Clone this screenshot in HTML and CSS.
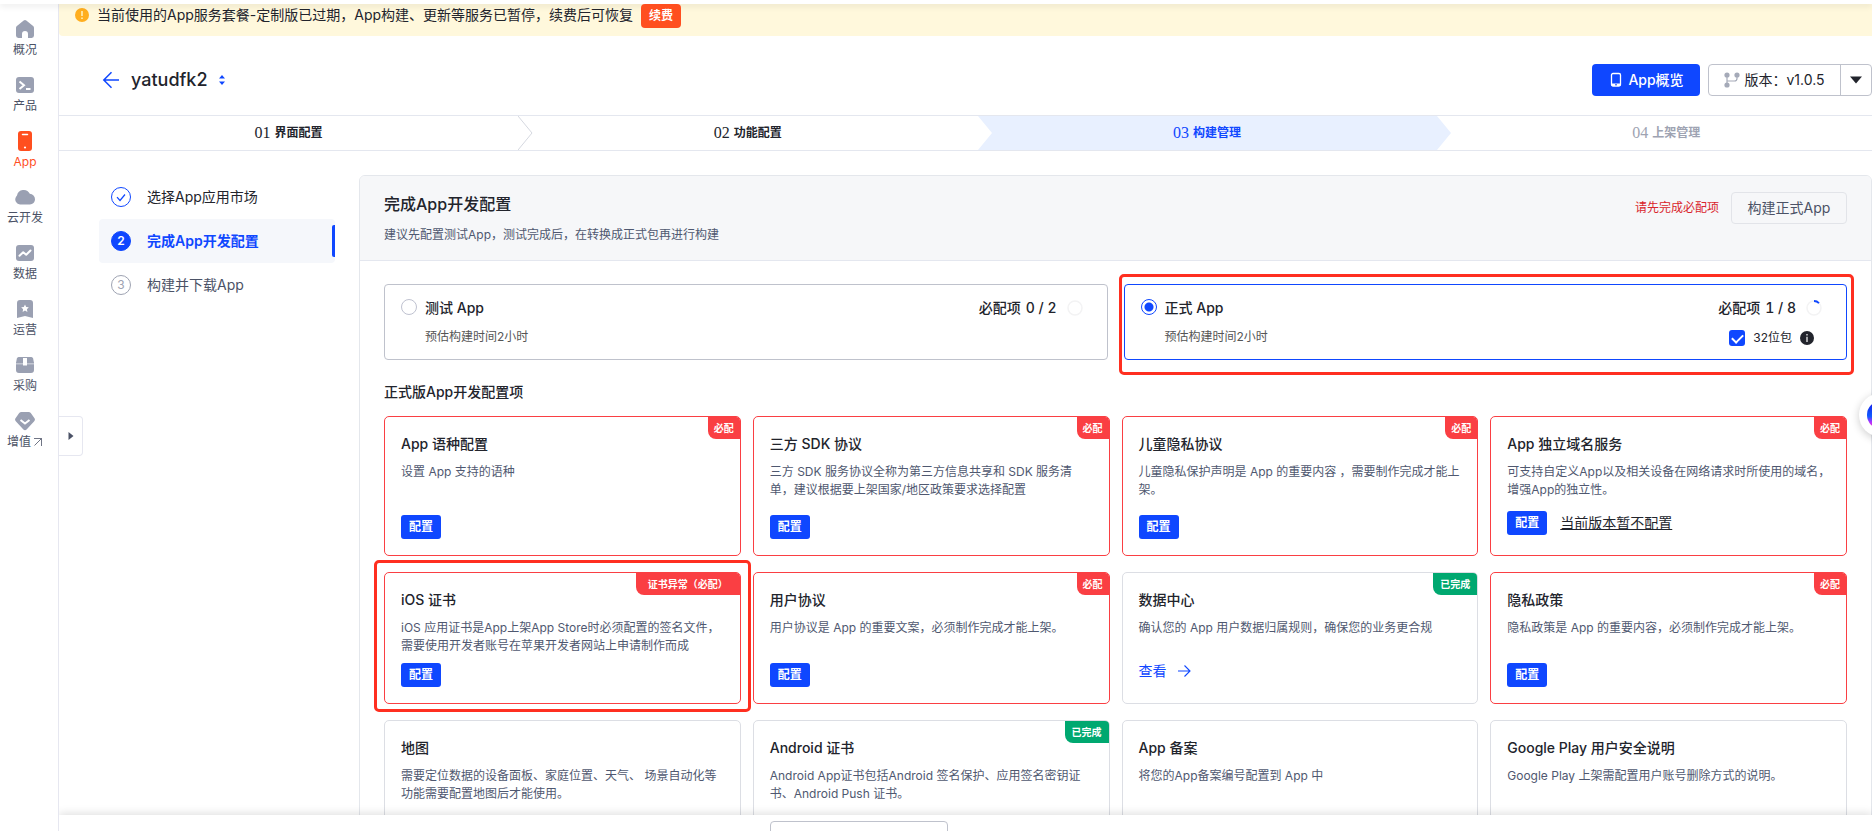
FILE: index.html
```html
<!DOCTYPE html>
<html lang="zh-CN">
<head>
<meta charset="utf-8">
<title>yatudfk2 - 构建管理</title>
<link rel="stylesheet" href="styles.css">
</head>
<body>
<div class="topbar"></div>
<div class="app">
  <nav class="sidebar">
    <a class="side-item" href="#"><svg width="20" height="20" viewBox="0 0 20 20"><path fill="currentColor" d="M8.7 1.5a2 2 0 0 1 2.6 0l6.8 5.6a2.4 2.4 0 0 1 .9 1.9v7.6a2.4 2.4 0 0 1-2.4 2.4H13v-4a3 3 0 0 0-6 0v4H3.400A2.400 2.400 0 0 1 1 16.600V9a2.400 2.400 0 0 1 .9-1.900z"/></svg>概况</a>
    <a class="side-item" href="#"><svg width="20" height="20" viewBox="0 0 20 20"><rect x="1" y="2" width="18" height="16" rx="3" fill="currentColor"/><path d="M4.500 6.500l4.500 3.700-4.500 3.700M11 14h4.500" fill="none" stroke="#fff" stroke-width="2"/></svg>产品</a>
    <a class="side-item active" href="#"><svg width="20" height="20" viewBox="0 0 20 20"><rect x="3" y="0" width="14" height="20" rx="3" fill="currentColor"/><path d="M7.500 3.500h5" stroke="#fff" stroke-width="1.500" stroke-linecap="round"/><circle cx="10" cy="16.500" r="1.100" fill="#fff"/></svg>App</a>
    <a class="side-item" href="#"><svg width="20" height="20" viewBox="0 0 20 20"><path fill="currentColor" d="M5 17.500a5 5 0 0 1-4.300-7A5 5 0 0 1 2 8.500a6.800 6.800 0 0 1 12.800-1.700 5.500 5.500 0 0 1 5.200 5.500c0 3-2.300 5.200-5 5.200z"/></svg>云开发</a>
    <a class="side-item" href="#"><svg width="20" height="20" viewBox="0 0 20 20"><rect x="1" y="2" width="18" height="16" rx="3" fill="currentColor"/><path d="M4.500 12.800l3.700-3.600 3 2.600 4.300-4.300" fill="none" stroke="#fff" stroke-width="2" stroke-linecap="round" stroke-linejoin="round"/></svg>数据</a>
    <a class="side-item" href="#"><svg width="20" height="20" viewBox="0 0 20 20"><path fill="currentColor" d="M2 4a3 3 0 0 1 3-3h10a3 3 0 0 1 3 3v15l-8-2-8 2z"/><path fill="#fff" d="M10 5.500l1.200 2.500 2.600.300-1.900 1.900.5 2.700L10 11.600l-2.400 1.300.5-2.700L6.200 8.300 8.800 8z"/></svg>运营</a>
    <a class="side-item" href="#"><svg width="20" height="20" viewBox="0 0 20 20"><path fill="#c3c7d2" d="M1 7h18v4H1z"/><path fill="currentColor" d="M1 9.500h18V15a3 3 0 0 1-3 3H4a3 3 0 0 1-3-3zM3.600 2h12.800a2 2 0 0 1 1.700 1.300L19 8H1l.9-4.700A2 2 0 0 1 3.600 2z"/><path fill="#fff" d="M8 3h4v7.500H8z"/></svg>采购</a>
    <a class="side-item" href="#"><svg width="20" height="20" viewBox="0 0 20 20"><path fill="currentColor" d="M6.500 1h7a3 3 0 0 1 2.300 1L19.300 7a2.500 2.500 0 0 1-.3 3.400L11.600 18.500a2.300 2.300 0 0 1-3.200 0L1 10.400A2.500 2.500 0 0 1 .7 7l3.500-5a3 3 0 0 1 2.300-1z"/><path d="M5.500 9l4.500 3.500L14.500 9" fill="none" stroke="#fff" stroke-width="2"/></svg><span class="side-ext">增值<svg width="10" height="10" viewBox="0 0 10 10"><path d="M1 1.500h7.500V9M8.500 1.500L1.500 8.500" fill="none" stroke="currentColor" stroke-width=".8"/></svg></span></a>
  </nav>

  <main class="main">
    <div class="banner">
      <svg width="14" height="14" viewBox="0 0 14 14"><circle cx="7" cy="7" r="7" fill="#ffae1f"/><path d="M7 3v5M7 9.500v1.500" stroke="#fff3c4" stroke-width="1.500"/></svg>
      <span class="banner-text">当前使用的App服务套餐-定制版已过期，App构建、更新等服务已暂停，续费后可恢复</span>
      <button class="btn-renew" type="button">续费</button>
    </div>

    <header class="header">
      <a class="back" href="#"><svg width="18" height="18" viewBox="0 0 18 18"><path d="M17 9H2M9.500 1.200L1.800 9l7.700 7.800" fill="none" stroke="currentColor" stroke-width="1.500"/></svg></a>
      <h1 class="title">yatudfk2</h1>
      <svg class="sorter" width="8" height="12" viewBox="0 0 8 12"><path fill="currentColor" d="M4 1l3 3.500H1zM4 11L1 7.500h6z"/></svg>
      <div class="header-actions">
        <button class="btn-primary" type="button"><svg width="12" height="16" viewBox="0 0 12 16"><rect x="1.500" y="1.500" width="9" height="12.500" rx="1.500" fill="none" stroke="currentColor" stroke-width="1.300"/><path d="M1.500 11.500h9v2.500h-9z" fill="currentColor"/><path d="M5 12.800h2" stroke="#0f47ff"/></svg>App概览</button>
        <div class="split">
          <button class="split-main" type="button"><svg width="16" height="16" viewBox="0 0 16 16"><g fill="#a5aab8"><circle cx="3" cy="3" r="2.600"/><circle cx="13" cy="3" r="2.600"/><circle cx="3" cy="13" r="2.600"/></g><path d="M3 3v10M3 9h7.500q2.500 0 2.500-2.500V3" fill="none" stroke="#a5aab8" stroke-width="1.200"/></svg>版本：v1.0.5</button>
          <button class="split-caret" type="button"><svg width="12" height="8" viewBox="0 0 12 8"><path fill="currentColor" d="M0 .500h12L6 7.500z"/></svg></button>
        </div>
      </div>
    </header>

    <ol class="steps">
      <li class="step"><span class="num">01</span>界面配置<svg class="chev" width="16" height="34" viewBox="0 0 16 34"><path d="M0 0l14 17L0 34" fill="#fff" stroke="#d5d8e0"/></svg></li>
      <li class="step"><span class="num">02</span>功能配置<svg class="chev" width="16" height="34" viewBox="0 0 16 34"><path d="M0 0l14 17L0 34" fill="#fff"/></svg></li>
      <li class="step current"><span class="num">03</span>构建管理<svg class="chev" width="16" height="34" viewBox="0 0 16 34"><path d="M0 0l14 17L0 34" fill="#e8f0ff"/></svg></li>
      <li class="step todo"><span class="num">04</span>上架管理</li>
    </ol>

    <div class="body">
      <nav class="tasks">
        <a class="task" href="#"><svg class="done" width="20" height="20" viewBox="0 0 20 20"><circle cx="10" cy="10" r="9.500" fill="none" stroke="currentColor"/><path d="M6 10.200l3 3.300 5-6" fill="none" stroke="currentColor" stroke-width="1.200"/></svg>选择App应用市场</a>
        <a class="task on" href="#"><span class="dot">2</span>完成App开发配置</a>
        <a class="task next" href="#"><span class="dot">3</span>构建并下载App</a>
      </nav>

      <section class="panel">
        <div class="panel-head">
          <div>
            <h2 class="panel-title">完成App开发配置</h2>
            <p class="panel-sub">建议先配置测试App，测试完成后，在转换成正式包再进行构建</p>
          </div>
          <div class="panel-actions">
            <span class="warn">请先完成必配项</span>
            <button class="btn-build" type="button">构建正式App</button>
          </div>
        </div>

        <div class="panel-body">
          <div class="kinds">
            <div class="kind">
              <input class="radio" type="radio" name="kind" id="kind-test">
              <div class="kind-text">
                <label class="kind-name" for="kind-test">测试 App</label>
                <p class="kind-sub">预估构建时间2小时</p>
              </div>
              <div class="kind-side">
                <div class="need"><span>必配项</span><span>0 / 2</span><svg class="ring" width="16" height="16" viewBox="0 0 16 16"><circle cx="8" cy="8" r="7" fill="none" stroke="#f3f3f4" stroke-width="1.500"/></svg></div>
              </div>
            </div>
            <div class="kind selected">
              <input class="radio" type="radio" name="kind" id="kind-prod" checked>
              <div class="kind-text">
                <label class="kind-name" for="kind-prod">正式 App</label>
                <p class="kind-sub">预估构建时间2小时</p>
              </div>
              <div class="kind-side">
                <div class="need"><span>必配项</span><span>1 / 8</span><svg class="ring" width="16" height="16" viewBox="0 0 16 16"><circle cx="8" cy="8" r="7" fill="none" stroke="#f3f3f4" stroke-width="1.500"/><path d="M8 1a7 7 0 0 1 5 2.100" fill="none" stroke="#0f47ff" stroke-width="1.800"/></svg></div>
                <div class="bits"><input class="check" type="checkbox" id="bits" checked><label for="bits">32位包</label><svg width="14" height="14" viewBox="0 0 14 14"><circle cx="7" cy="7" r="7" fill="#22242c"/><path d="M7 3v1.500M7 5.800V11" stroke="#fff" stroke-width="1.200"/></svg></div>
              </div>
              <span class="mark mark-kind"></span>
            </div>
          </div>

          <h3 class="section">正式版App开发配置项</h3>

          <div class="cards">
            <article class="card must"><span class="badge">必配</span><h4>App 语种配置</h4><p>设置 App 支持的语种</p><div class="acts"><button class="btn-conf" type="button">配置</button></div></article>
            <article class="card must"><span class="badge">必配</span><h4>三方 SDK 协议</h4><p>三方 SDK 服务协议全称为第三方信息共享和 SDK 服务清<br>单，建议根据要上架国家/地区政策要求选择配置</p><div class="acts"><button class="btn-conf" type="button">配置</button></div></article>
            <article class="card must"><span class="badge">必配</span><h4>儿童隐私协议</h4><p>儿童隐私保护声明是 App 的重要内容 ，需要制作完成才能上架。</p><div class="acts"><button class="btn-conf" type="button">配置</button></div></article>
            <article class="card must"><span class="badge">必配</span><h4>App 独立域名服务</h4><p>可支持自定义App以及相关设备在网络请求时所使用的域名，<br>增强App的独立性。</p><div class="acts tall"><button class="btn-conf" type="button">配置</button><a class="skip" href="#">当前版本暂不配置</a></div></article>

            <article class="card must"><span class="badge wide">证书异常（必配）</span><h4>iOS 证书</h4><p>iOS 应用证书是App上架App Store时必须配置的签名文件，需要使用开发者账号在苹果开发者网站上申请制作而成</p><div class="acts"><button class="btn-conf" type="button">配置</button></div><span class="mark mark-card"></span></article>
            <article class="card must"><span class="badge">必配</span><h4>用户协议</h4><p>用户协议是 App 的重要文案，必须制作完成才能上架。</p><div class="acts"><button class="btn-conf" type="button">配置</button></div></article>
            <article class="card"><span class="badge ok">已完成</span><h4>数据中心</h4><p>确认您的 App 用户数据归属规则，确保您的业务更合规</p><div class="acts tall"><a class="view" href="#">查看<svg width="14" height="14" viewBox="0 0 14 14"><path d="M1 7h11.500M7.500 1.500L13 7l-5.500 5.500" fill="none" stroke="currentColor" stroke-width="1.100"/></svg></a></div></article>
            <article class="card must"><span class="badge">必配</span><h4>隐私政策</h4><p>隐私政策是 App 的重要内容，必须制作完成才能上架。</p><div class="acts"><button class="btn-conf" type="button">配置</button></div></article>

            <article class="card"><h4>地图</h4><p>需要定位数据的设备面板、家庭位置、天气、 场景自动化等功能需要配置地图后才能使用。</p></article>
            <article class="card"><span class="badge ok">已完成</span><h4>Android 证书</h4><p>Android App证书包括Android 签名保护、应用签名密钥证书、Android Push 证书。</p></article>
            <article class="card"><h4>App 备案</h4><p>将您的App备案编号配置到 App 中</p></article>
            <article class="card"><h4>Google Play 用户安全说明</h4><p>Google Play 上架需配置用户账号删除方式的说明。</p></article>
          </div>
        </div>
      </section>
    </div>

    <button class="drawer" type="button"><svg width="6" height="10" viewBox="0 0 6 10"><path fill="currentColor" d="M.500 1L5.500 5l-5 4z"/></svg></button>
    <footer class="footer"><button class="btn-foot" type="button"></button></footer>
  </main>
</div>
<button class="fab" type="button"><svg width="28" height="28" viewBox="0 0 28 28"><defs><linearGradient id="g" x1="0" y1="0" x2="0" y2="1"><stop offset="0" stop-color="#1818e8"/><stop offset=".55" stop-color="#0f5cff"/><stop offset=".75" stop-color="#b030ff"/><stop offset="1" stop-color="#ff3cc8"/></linearGradient></defs><circle cx="14" cy="14" r="14" fill="url(#g)"/></svg></button>
</body>
</html>
```
FILE: styles.css
```css
* { box-sizing: border-box; margin: 0; padding: 0; }

body {
  height: 100vh;
  overflow: hidden;
  display: flex;
  flex-direction: column;
  background: #fff;
  color: #22242c;
  font: 14px/22px Inter, "Noto Sans CJK SC", sans-serif;
}

button { font: inherit; color: inherit; cursor: pointer; }
a { color: inherit; text-decoration: none; }
svg { flex: none; display: block; }

.topbar {
  height: 4px;
  flex: none;
  background: #fff;
  box-shadow: 0 2px 6px rgba(0, 0, 0, .1);
  position: relative;
  z-index: 5;
}

.app { flex: 1; display: flex; min-height: 0; }

.sidebar {
  width: 59px;
  flex: none;
  padding: 14px 8px 0 0;
  border-right: 1px solid #e6e7f0;
}

.side-item {
  height: 56px;
  display: flex;
  flex-direction: column;
  align-items: center;
  gap: 2px;
  color: #4b5266;
  font-size: 12px;
  line-height: 18px;
}
.side-item > svg { color: #9aa0b2; margin-top: 1px; }
.side-item.active, .side-item.active > svg { color: #ff4f1f; }
.side-ext { display: flex; align-items: center; gap: 2px; }

.main {
  flex: 1;
  min-width: 0;
  display: flex;
  flex-direction: column;
  overflow: hidden;
  position: relative;
}

.banner {
  display: flex;
  flex: none;
  align-items: center;
  gap: 8px;
  padding: 0 16px 8px;
  background: #fff8dc;
  border-radius: 0 0 0 4px;
}
.banner > svg { margin-top: -2px; }
.banner-text { margin-top: -2px; }
.btn-renew {
  position: relative;
  z-index: 6;
  height: 24px;
  padding: 0 8px;
  border: 0;
  border-radius: 4px;
  background: #ff4f1f;
  color: #fff;
  font-size: 12px;
  font-weight: 600;
}

.header {
  display: flex;
  flex: none;
  align-items: center;
  padding: 28px 0 19px 43px;
}
.back { color: #0f47ff; margin-right: 11px; }
.title { font-size: 18px; font-weight: 500; line-height: 28px; }
.sorter { color: #0f47ff; margin-left: 10px; }
.header-actions { margin-left: auto; display: flex; gap: 8px; }
.btn-primary {
  height: 32px;
  width: 108px;
  display: flex;
  align-items: center;
  justify-content: center;
  gap: 6px;
  padding-left: 2px;
  border: 0;
  border-radius: 4px;
  background: #0f47ff;
  color: #fff;
  font-weight: 500;
}
.split { display: flex; height: 32px; border: 1px solid #bfc2cc; border-radius: 4px; }
.split button { border: 0; background: none; display: flex; align-items: center; justify-content: center; }
.split-main { width: 131px; gap: 4px; }
.split .split-caret { width: 31px; border-left: 1px solid #bfc2cc; }

.steps {
  list-style: none;
  flex: none;
  display: flex;
  width: calc(100% + 24px);
  height: 36px;
  border: solid #e4e7ef;
  border-width: 1px 0;
}
.step {
  flex: 1;
  display: flex;
  align-items: center;
  justify-content: center;
  gap: 4px;
  font-size: 12px;
  font-weight: 600;
  position: relative;
}
.num { font: 16px/20px "Liberation Serif", serif; }
.step.current { background: #e8f0ff; color: #0f47ff; }
.step.todo { color: #9ea3b2; }
.chev { position: absolute; left: 100%; top: 0; z-index: 1; }

.body {
  flex: 1;
  min-height: 0;
  display: flex;
  gap: 24px;
  padding: 24px 0 0 40px;
}
.tasks { width: 236px; flex: none; }
.task {
  height: 44px;
  padding-left: 12px;
  display: flex;
  align-items: center;
  gap: 16px;
  border-radius: 4px;
}
.done { color: #0f47ff; }
.dot {
  width: 20px;
  height: 20px;
  border: 1px solid #9ea3b2;
  border-radius: 50%;
  color: #9ea3b2;
  font-size: 12px;
  line-height: 18px;
  text-align: center;
}
.task.next { color: #4b5266; }
.task.on {
  position: relative;
  background: #f5f7fb;
  color: #0f47ff;
  font-weight: 600;
}
.task.on .dot { background: #0f47ff; border-color: #0f47ff; color: #fff; }
.task.on::after {
  content: "";
  position: absolute;
  right: 0;
  top: 6px;
  width: 3px;
  height: 32px;
  border-radius: 2px 0 0 2px;
  background: #0f47ff;
}

.panel {
  flex: 1;
  min-width: 0;
  height: max-content;
  border: 1px solid #e4e7ec;
  border-radius: 6px;
}
.panel-head {
  display: flex;
  justify-content: space-between;
  padding: 16px 24px 15px;
  background: #f6f7f9;
  border-bottom: 1px solid #e4e7ef;
  border-radius: 5px 5px 0 0;
}
.panel-title { font-size: 16px; font-weight: 500; line-height: 24px; margin-bottom: 9px; }
.panel-sub { font-size: 12px; line-height: 20px; color: #4f5870; }
.panel-actions { display: flex; align-items: flex-start; gap: 12px; }
.warn { color: #d9242b; font-size: 12px; line-height: 32px; }
.btn-build {
  height: 32px;
  width: 116px;
  border: 1px solid #e2e4e9;
  border-radius: 4px;
  background: none;
  color: #4b5266;
}

.panel-body { padding: 23px 24px 24px; }
.kinds { display: grid; grid-template-columns: 1fr 1fr; gap: 16px; }
.kind {
  position: relative;
  display: flex;
  padding: 12px 24px 12px 16px;
  border: 1px solid #bfc2cc;
  border-radius: 4px;
}
.kind.selected { border-color: #0f47ff; }
.radio {
  appearance: none;
  width: 16px;
  height: 16px;
  margin: 2px 8px 0 0;
  border: 1px solid #bfc2d0;
  border-radius: 50%;
}
.radio:checked {
  border-color: #0f47ff;
  background: radial-gradient(circle, #0f47ff 4px, #fff 5px);
}
.kind-name { display: block; font-weight: 500; margin-bottom: 9px; }
.kind-sub { font-size: 12px; line-height: 18px; color: #555; }
.kind-side { margin-left: auto; }
.need {
  display: flex;
  align-items: center;
  gap: 5px;
  font-weight: 500;
  font-variant-numeric: tabular-nums;
}
.ring { margin-left: 5px; }
.bits {
  display: flex;
  align-items: center;
  justify-content: flex-end;
  gap: 8px;
  margin: 10px 8px 0 0;
  font-size: 12px;
  line-height: 18px;
}
.check {
  appearance: none;
  width: 16px;
  height: 16px;
  border-radius: 3px;
  background: #0f47ff;
  display: grid;
  place-items: center;
}
.check::before {
  content: "";
  width: 9px;
  height: 5px;
  border: solid #fff;
  border-width: 0 0 2px 2px;
  transform: rotate(-45deg);
  margin-bottom: 2px;
}

.section { font-size: 14px; font-weight: 500; line-height: 24px; margin: 20px 0 12px; }

.cards { display: grid; grid-template-columns: repeat(4, minmax(0, 1fr)); gap: 16px 12px; }
.card {
  position: relative;
  min-height: 132px;
  display: flex;
  flex-direction: column;
  padding: 16px 12px 16px 16px;
  border: 1px solid #dcdee4;
  border-radius: 5px;
}
.card.must { border-color: #fa3f43; }
.card h4 { font-size: 14px; font-weight: 500; line-height: 22px; margin-bottom: 8px; }
.card p { font-size: 12px; line-height: 18px; color: #4f5870; }
.acts { margin-top: auto; padding-top: 8px; display: flex; align-items: center; gap: 13px; }
.acts.tall { min-height: 40px; }
.btn-conf {
  width: 40px;
  height: 24px;
  border: 0;
  border-radius: 3px;
  background: #0f47ff;
  color: #fff;
  font-size: 12px;
  font-weight: 600;
  line-height: 22px;
}
.skip { text-decoration: underline; }
.view { display: flex; align-items: center; gap: 10px; color: #0f47ff; }
.badge {
  position: absolute;
  top: 0;
  right: 0;
  padding: 0 6px;
  border-radius: 0 4px 0 8px;
  background: #fa3f43;
  color: #fff;
  font-size: 10px;
  font-weight: 600;
  line-height: 22px;
}
.badge.wide { padding: 0 12px; }
.badge.ok { background: #00a870; padding: 0 7px; }

.mark {
  position: absolute;
  z-index: 1;
  border: 3px solid #ff2f20;
  border-radius: 5px;
  pointer-events: none;
}
.mark-kind { inset: -11px -8px -16px -6px; }
.mark-card { inset: -13px -11px -9px -11px; }

.drawer {
  position: absolute;
  left: -1px;
  top: 412px;
  width: 25px;
  height: 40px;
  display: grid;
  place-items: center;
  border: 1px solid #e6e7f0;
  border-left-color: #fff;
  border-radius: 0 4px 4px 0;
  background: #fff;
  color: #4b5266;
}

.footer {
  position: relative;
  z-index: 2;
  flex: none;
  height: 16px;
  padding-top: 6px;
  background: #fff;
  box-shadow: 0 -2px 8px rgba(0, 0, 0, .12);
}
.btn-foot {
  display: block;
  width: 178px;
  height: 32px;
  margin-left: calc(50% - 196px);
  border: 1px solid #bfc2cc;
  border-radius: 4px;
  background: #fff;
}

.fab {
  position: fixed;
  right: -31px;
  top: 393px;
  width: 44px;
  height: 44px;
  display: grid;
  place-items: center;
  border: 0;
  border-radius: 50%;
  background: #fff;
  box-shadow: 0 2px 8px rgba(0, 0, 0, .2);
  z-index: 4;
}
```
